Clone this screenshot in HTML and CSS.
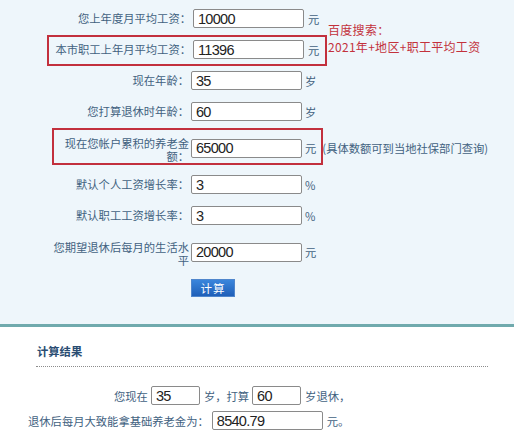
FILE: index.html
```html
<!DOCTYPE html>
<html lang="zh-CN">
<head>
<meta charset="utf-8">
<title>养老金计算器</title>
<link rel="stylesheet" href="styles.css">
</head>
<body>
<form class="calc">
  <div class="row lead">
    <label class="label">您上年度月平均工资：</label>
    <input class="field" type="text" value="10000">
    <span class="unit">元</span>
  </div>
  <div class="row lead marked marked-wage">
    <label class="label">本市职工上年月平均工资：</label>
    <input class="field" type="text" value="11396">
    <span class="unit">元</span>
  </div>
  <div class="row">
    <label class="label">现在年龄：</label>
    <input class="field" type="text" value="35">
    <span class="unit">岁</span>
  </div>
  <div class="row">
    <label class="label">您打算退休时年龄：</label>
    <input class="field" type="text" value="60">
    <span class="unit">岁</span>
  </div>
  <div class="row tall marked marked-fund">
    <label class="label">现在您帐户累积的养老金额：</label>
    <input class="field" type="text" value="65000">
    <span class="unit">元</span>
    <span class="note">(具体数额可到当地社保部门查询)</span>
  </div>
  <div class="row">
    <label class="label">默认个人工资增长率：</label>
    <input class="field" type="text" value="3">
    <span class="unit">%</span>
  </div>
  <div class="row">
    <label class="label">默认职工工资增长率：</label>
    <input class="field" type="text" value="3">
    <span class="unit">%</span>
  </div>
  <div class="row tall">
    <label class="label">您期望退休后每月的生活水平</label>
    <input class="field" type="text" value="20000">
    <span class="unit">元</span>
  </div>
  <div class="row actions">
    <button class="btn" type="button">计算</button>
  </div>
  <p class="hint"><span class="hint-line">百度搜索：</span><span class="hint-line">2021年+地区+职工平均工资</span></p>
</form>

<section class="result">
  <h3 class="result-head">计算结果</h3>
  <div class="result-row result-age">
    <span>您现在</span>
    <input class="field short" type="text" value="35">
    <span>岁，打算</span>
    <input class="field short" type="text" value="60">
    <span>岁退休，</span>
  </div>
  <div class="result-row result-pension">
    <span>退休后每月大致能拿基础养老金为：</span>
    <input class="field" type="text" value="8540.79">
    <span>元。</span>
  </div>
</section>
</body>
</html>
```
FILE: styles.css
```css
* {
  box-sizing: border-box;
}

body {
  margin: 0;
  background: #ffffff;
  font-family: "Noto Sans CJK SC", "Noto Sans", sans-serif;
  font-size: 11.3px;
  color: #42627f;
}

/* input panel */
.calc {
  position: relative;
  margin: 0;
  padding: 3px 0 21px;
  background: #eef6fb;
  border-bottom: 3px solid #70aaad;
}

.row {
  position: relative;
  display: flex;
  align-items: center;
  height: 31px;
}

.row.tall {
  height: 42px;
}

.label {
  flex: none;
  width: 141px;
  margin-left: 48px;
  text-align: right;
  line-height: 13px;
}

.row.lead .label {
  margin-left: 50px;
}

.row.tall .label {
  padding-top: 4px;
}

.field {
  flex: none;
  width: 111px;
  height: 19px;
  margin: 0 0 0 2px;
  padding: 0 0 0 4px;
  border: 1px solid #8a8a8a;
  border-radius: 2px;
  background: #ffffff;
  font-family: "Liberation Sans", Arial, sans-serif;
  font-size: 14.5px;
  letter-spacing: -0.7px;
  color: #222222;
  outline: none;
}

.unit {
  margin-left: 3px;
}

.row.lead .unit {
  margin-left: 4px;
}

.note {
  position: relative;
  z-index: 1;
  margin-left: 6px;
}

/* red annotation frames */
.marked::before {
  content: "";
  position: absolute;
  border: 2px solid #c2303d;
  pointer-events: none;
}

.marked-wage::before {
  left: 47px;
  width: 276px;
  top: 1px;
  height: 27px;
}

.marked-fund::before {
  left: 52px;
  width: 267px;
  top: 1px;
  height: 33px;
}

.hint {
  position: absolute;
  left: 328px;
  top: 21px;
  margin: 0;
  font-size: 12px;
  letter-spacing: 0.3px;
  color: #c3323c;
}

.hint-line {
  display: block;
  height: 17px;
  line-height: 17.5px;
  white-space: nowrap;
}

.actions {
  height: 30px;
}

.btn {
  margin-left: 191px;
  width: 44px;
  height: 18px;
  padding: 0;
  border: 1px solid #4f86cc;
  background: linear-gradient(#3a86dc, #1f5fb8);
  color: #ffffff;
  font-family: "Noto Sans CJK SC", sans-serif;
  font-size: 11.5px;
  line-height: 16px;
  letter-spacing: 1px;
}

/* result block */
.result {
  padding-bottom: 6px;
}

.result-head {
  margin: 0 26px 0 36px;
  padding: 16px 0 6px 1px;
  border-bottom: 1px dotted #8c8c8c;
  font-size: 11.3px;
  font-weight: 700;
  line-height: 17px;
  color: #2a4d72;
}

.result-row {
  display: flex;
  align-items: center;
  height: 25px;
}

.result-age {
  margin-top: 16px;
  padding-left: 114px;
}

.result-pension {
  padding-left: 28px;
}

.result-row .field {
  margin: 0 4px 0 3px;
}

.field.short {
  width: 49px;
}
```
